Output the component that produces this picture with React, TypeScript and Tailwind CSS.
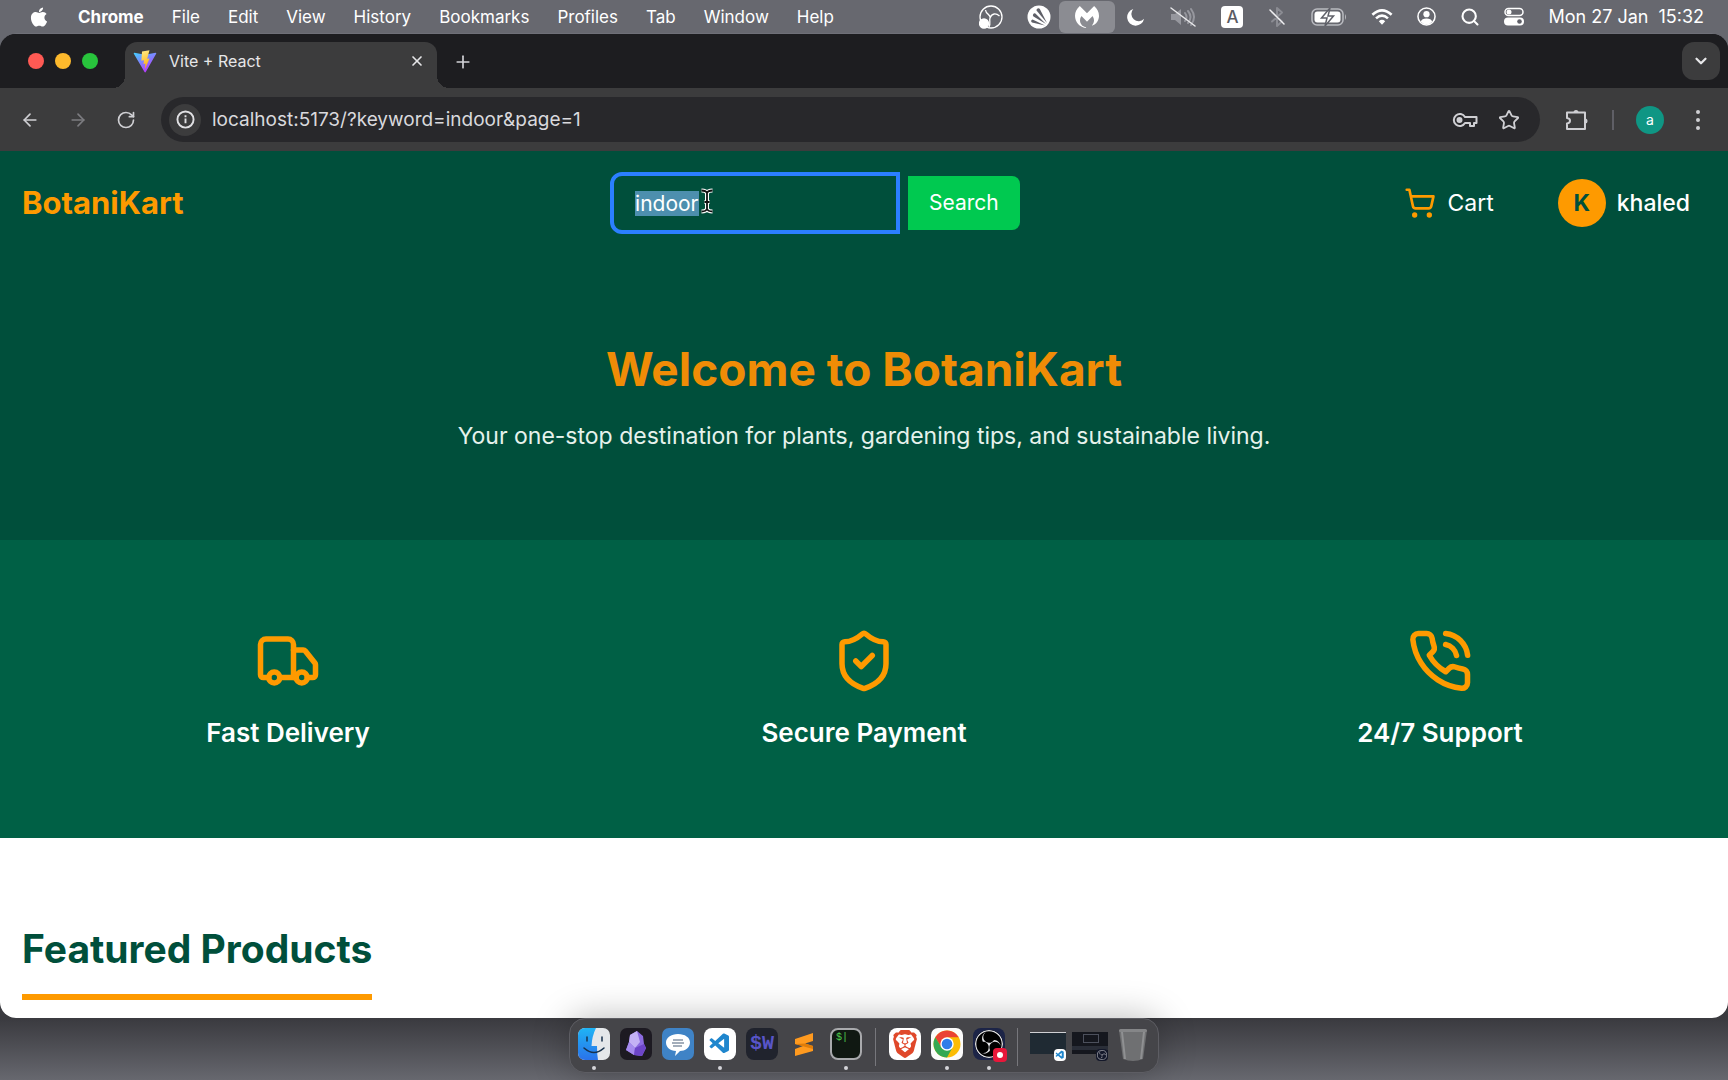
import { useEffect, useRef } from "react";
import type { ReactNode } from "react";
import {
  ArrowLeft,
  ArrowRight,
  ChevronDown,
  Plus,
  RotateCw,
  Search,
  ShieldCheck,
  ShoppingCart,
  Star,
  Truck,
  X,
} from "lucide-react";
import { FaApple } from "react-icons/fa";
import { SiBrave, SiMalwarebytes, SiObsstudio } from "react-icons/si";
import { VscVscode } from "react-icons/vsc";

const menus = ["File", "Edit", "View", "History", "Bookmarks", "Profiles", "Tab", "Window", "Help"];

function ObsGlyph({ className }: { className: string }) {
  return (
    <svg viewBox="0 0 24 24" className={className} fill="none" stroke="currentColor" strokeWidth="1.3">
      <circle cx="12" cy="12" r="11" />
      <path d="M11 13c1-4-4-3-4.500-8M11 13c2-5 6-5 9.500-2M11 13c-1 3 1 5-1 9" />
      <circle cx="5" cy="18.500" r="4.500" fill="currentColor" />
    </svg>
  );
}

function AvastGlyph() {
  return (
    <svg viewBox="0 0 24 24" className="size-6">
      <circle cx="12" cy="12" r="11.500" fill="#fff" />
      <g fill="#5f6068">
        <path d="M20 18L9.500 5.500a1.900 1.900 0 0 1 3.300-1.500z" />
        <path d="M19 19L6.500 11.500a1.800 1.800 0 0 1 1.900-3z" />
        <path d="M18 20.500L5 17.500a1.600 1.600 0 0 1 .6-3z" />
      </g>
    </svg>
  );
}

function MutedGlyph() {
  return (
    <svg viewBox="0 0 28 24" className="h-6 w-7" fill="none" strokeLinecap="round">
      <path d="M2 9h4l6-5v16l-6-5H2z" fill="#96979e" />
      <path d="M16 8q3 4 0 8M19 6q5 6 0 12M22 4q6 8 0 16" stroke="#96979e" strokeWidth="2" />
      <path d="M2 3l24 18" stroke="#e8e8ea" strokeWidth="1.500" />
    </svg>
  );
}

function BluetoothGlyph() {
  return (
    <svg viewBox="0 0 20 24" className="h-6 w-5" fill="none" strokeLinecap="round" strokeLinejoin="round">
      <path d="M5 7.500l10 9-5 4.500V3l5 4.500-10 9" stroke="#8b8c93" strokeWidth="2" />
      <path d="M3 5l14 14" stroke="#f0f0f2" strokeWidth="1.500" />
    </svg>
  );
}

function BatteryGlyph() {
  return (
    <svg viewBox="0 0 36 18" className="h-[18px] w-9">
      <rect x="1" y="1" width="31" height="16" rx="5" fill="none" stroke="#b9bac0" strokeWidth="1.500" />
      <path d="M34 6q2 3 0 6z" fill="#b9bac0" />
      <rect x="3.500" y="3.500" width="26" height="11" rx="3" fill="#fff" />
      <path d="M19 0l-8.500 10H16l-2 8 8.500-10H17z" fill="#fff" stroke="#5f6068" strokeWidth="1.500" />
    </svg>
  );
}

function WifiGlyph() {
  return (
    <svg viewBox="0 0 24 18" className="h-[18px] w-[22px]" fill="none" stroke="#fff" strokeWidth="2.800">
      <path d="M1.500 6.500q10.500-9.500 21 0M5.500 10.500q6.500-6 13 0" />
      <path d="M8.500 13.500q3.500-3 7 0L12 17.500z" fill="#fff" stroke="none" />
    </svg>
  );
}

function UserGlyph() {
  return (
    <svg viewBox="0 0 20 20" className="size-[19px]">
      <circle cx="10" cy="10" r="9" fill="none" stroke="#fff" strokeWidth="1.600" />
      <circle cx="10" cy="7.500" r="3.300" fill="#fff" />
      <path d="M4 15.500q1-3.500 6-3.500t6 3.500q-2.500 3-6 3t-6-3z" fill="#fff" />
    </svg>
  );
}

function ControlGlyph() {
  return (
    <svg viewBox="0 0 20 18" className="h-[19px] w-5">
      <rect x="1" y="1" width="18" height="7" rx="3.500" fill="none" stroke="#fff" strokeWidth="1.500" />
      <circle cx="5" cy="4.500" r="2.500" fill="#fff" />
      <rect x="0" y="10" width="20" height="8" rx="4" fill="#fff" />
      <circle cx="15.500" cy="14" r="2.300" fill="#5f6068" />
    </svg>
  );
}

function ViteLogo() {
  return (
    <svg viewBox="0 0 32 32" className="size-6 shrink-0">
      <defs>
        <linearGradient id="vite-body" x1="0" y1="0" x2="0.600" y2="1">
          <stop offset="0" stopColor="#41d1ff" />
          <stop offset="1" stopColor="#bd34fe" />
        </linearGradient>
        <linearGradient id="vite-bolt" x1="0.400" y1="0" x2="0.600" y2="1">
          <stop offset="0" stopColor="#ffea83" />
          <stop offset="1" stopColor="#ffa800" />
        </linearGradient>
      </defs>
      <path d="M30.900 6.300L17 30.700a.9.9 0 0 1-1.600 0L1.100 6.300a.9.9 0 0 1 .9-1.300l14 2.500 14-2.500a.9.9 0 0 1 .9 1.300z" fill="url(#vite-body)" />
      <path d="M22 1.500L12 3.400l-.8 12.300 3.500-.8-.7 5 2.600-.6-.8 7.700 6.300-14.500-3.200.6z" fill="url(#vite-bolt)" />
    </svg>
  );
}

function PhoneIcon({ className }: { className?: string }) {
  return (
    <svg viewBox="0 0 24 24" className={className} fill="none" stroke="currentColor" strokeWidth="2" strokeLinecap="round" strokeLinejoin="round">
      <path d="M22 16.920v3a2 2 0 0 1-2.180 2 19.790 19.790 0 0 1-8.630-3.070 19.500 19.500 0 0 1-6-6 19.790 19.790 0 0 1-3.070-8.670A2 2 0 0 1 4.110 2h3a2 2 0 0 1 2 1.720 12.840 12.840 0 0 0 .7 2.810 2 2 0 0 1-.45 2.110L8.090 9.910a16 16 0 0 0 6 6l1.270-1.270a2 2 0 0 1 2.110-.45 12.840 12.840 0 0 0 2.810.7A2 2 0 0 1 22 16.920z" />
      <path d="M14.050 2a9 9 0 0 1 8 7.940M14.050 6A5 5 0 0 1 18 10" />
    </svg>
  );
}

function MenuBar() {
  return (
    <header className="flex h-[33px] shrink-0 items-center justify-between pl-7 pr-6 text-[17px] leading-6 text-white">
      <nav aria-label="Application menu" className="flex items-center gap-7">
        <button aria-label="Apple menu">
          <FaApple className="size-[22px]" />
        </button>
        <button className="font-bold">Chrome</button>
        {menus.map((m) => (
          <button key={m}>{m}</button>
        ))}
      </nav>
      <div className="flex items-center gap-6">
        <ObsGlyph className="size-6" />
        <AvastGlyph />
        <span className="-ml-4 -mr-3 flex h-8 w-14 items-center justify-center rounded-md bg-[#8b8c92]">
          <SiMalwarebytes className="size-6" />
        </span>
        <svg viewBox="0 0 20 20" className="size-[18px]">
          <path d="M7 1a8 8 0 0 0 12 11A9.500 9.500 0 1 1 7 1z" fill="#fff" />
        </svg>
        <MutedGlyph />
        <span className="flex size-[22px] items-center justify-center rounded bg-white text-[17px] font-medium text-[#5a5b63]">A</span>
        <BluetoothGlyph />
        <BatteryGlyph />
        <WifiGlyph />
        <UserGlyph />
        <Search className="size-5" strokeWidth={2.500} />
        <ControlGlyph />
        <time className="flex gap-2.5 whitespace-nowrap text-lg leading-6">
          <span>Mon 27 Jan</span>
          <span>15:32</span>
        </time>
      </div>
    </header>
  );
}

function TabStrip() {
  return (
    <div className="flex h-[54px] items-end bg-[#1d1d20] pr-2">
      <div className="mr-[27px] flex gap-[11px] self-center pl-7">
        <button aria-label="Close window" className="size-4 rounded-full bg-[#ff5a54]" />
        <button aria-label="Minimise window" className="size-4 rounded-full bg-[#fdb92c]" />
        <button aria-label="Zoom window" className="size-4 rounded-full bg-[#28c43c]" />
      </div>
      <div className="relative flex h-[46px] w-[312px] items-center gap-3 rounded-t-xl bg-[#3c3c3d] pb-3 pl-2 pr-3 pt-1">
        <span className="absolute -left-3 bottom-0 size-3 bg-[radial-gradient(circle_at_0_0,transparent_12px,#3c3c3d_12px)]" />
        <span className="absolute -right-3 bottom-0 size-3 bg-[radial-gradient(circle_at_100%_0,transparent_12px,#3c3c3d_12px)]" />
        <ViteLogo />
        <span className="flex-1 text-base leading-5 text-[#e6e6e8]">Vite + React</span>
        <button aria-label="Close tab">
          <X className="size-4 text-[#e6e6e8]" strokeWidth={2.500} />
        </button>
      </div>
      <button aria-label="New tab" className="mb-4 ml-4 text-[#d2d2d6]">
        <Plus className="size-5" strokeWidth={2} />
      </button>
      <button
        aria-label="Search tabs"
        className="mb-2 ml-auto flex size-[38px] items-center justify-center rounded-xl bg-[#3c3c3d] text-[#e6e6e8]"
      >
        <ChevronDown className="size-[18px]" strokeWidth={3} />
      </button>
    </div>
  );
}

function Toolbar() {
  return (
    <div className="flex h-[63px] items-center bg-[#3c3c3d] pl-5 pr-[18px] text-[#cfcfd3]">
      <div className="mr-[25px] flex gap-7">
        <button aria-label="Back">
          <ArrowLeft className="size-5" />
        </button>
        <button aria-label="Forward" className="text-[#7c7c80]">
          <ArrowRight className="size-5" />
        </button>
        <button aria-label="Reload">
          <RotateCw className="size-5" />
        </button>
      </div>
      <div className="flex h-[45px] flex-1 items-center rounded-full bg-[#28282b] pl-2 pr-5">
        <span className="mr-[11px] flex size-8 items-center justify-center rounded-full bg-[#3c3c3d]">
          <svg viewBox="0 0 20 20" className="size-[19px]" fill="none" stroke="#e0e0e3" strokeWidth="2">
            <circle cx="10" cy="10" r="8.500" />
            <path d="M10 9v5M10 5.500v2" />
          </svg>
        </span>
        <input
          aria-label="Address"
          readOnly
          value="localhost:5173/?keyword=indoor&page=1"
          className="min-w-0 flex-1 bg-transparent text-[19px] leading-6 text-[#d9d9dd] outline-none"
        />
        <svg viewBox="0 0 26 16" className="h-4 w-[26px]" fill="none" stroke="currentColor" strokeWidth="2">
          <path d="M13 5a6 6 0 1 0 0 6h5v3h4v-3h2.500V5z" strokeLinejoin="round" />
          <circle cx="7.500" cy="8" r="2" fill="currentColor" />
        </svg>
        <button aria-label="Bookmark this page" className="ml-5">
          <Star className="size-[22px]" />
        </button>
      </div>
      <button aria-label="Extensions" className="ml-6">
        <svg viewBox="0 0 24 24" className="size-6" fill="none" stroke="currentColor" strokeWidth="2" strokeLinejoin="round">
          <path d="M3 4.500h18v16.500H3v-5.500q3-.5 3-2.750t-3-2.750z" />
          <path d="M9.500 4.500a2.500 2.500 0 0 1 5 0zM21 10.500a2.500 2.500 0 0 1 0 5z" fill="currentColor" stroke="none" />
        </svg>
      </button>
      <span className="ml-6 h-5 w-0.5 bg-[#5f5f66]" />
      <span className="ml-[22px] flex size-7 items-center justify-center rounded-full bg-[#0f9684] text-sm text-white">a</span>
      <button aria-label="Browser menu" className="ml-[22px] flex w-6 justify-center">
        <svg viewBox="0 0 6 20" className="h-5 w-[6px]" fill="currentColor">
          <circle cx="3" cy="2" r="2" />
          <circle cx="3" cy="10" r="2" />
          <circle cx="3" cy="18" r="2" />
        </svg>
      </button>
    </div>
  );
}

function SiteHeader() {
  const field = useRef<HTMLInputElement>(null);
  useEffect(() => {
    field.current?.focus();
    field.current?.select();
  }, []);
  return (
    <header className="grid grid-cols-[53fr_auto_60fr] items-center pb-6 pl-[22px] pr-[38px] pt-[25px]">
      <a href="#home" className="text-[31px] font-bold leading-9 text-[#fe9a00]">
        BotaniKart
      </a>
      <form className="flex gap-3" onSubmit={(e) => e.preventDefault()}>
        <div className="relative flex">
          <input
            ref={field}
            aria-label="Search plants"
            defaultValue="indoor"
            className="h-[54px] w-[282px] rounded-l-lg bg-transparent px-[21px] text-[21px] leading-8 text-white outline-4 outline-[#2b7fff] selection:bg-[#4d8fae] selection:text-white"
          />
          <svg viewBox="0 0 14 26" className="pointer-events-none absolute left-[86px] top-3 h-[26px] w-[14px]" fill="none">
            <path d="M1.500 2.500Q6 2.500 7 5q1-2.500 5.500-2.500M7 5v16M1.500 23.500Q6 23.500 7 21q1 2.500 5.500 2.500M4.500 14h5" stroke="#fff" strokeWidth="4" />
            <path d="M1.500 2.500Q6 2.500 7 5q1-2.500 5.500-2.500M7 5v16M1.500 23.500Q6 23.500 7 21q1 2.500 5.500 2.500M4.500 14h5" stroke="#111" strokeWidth="1.800" />
          </svg>
        </div>
        <button className="h-[54px] rounded-r-lg bg-[#00c950] px-[21px] text-[21px] leading-8 text-white">Search</button>
      </form>
      <div className="flex items-center justify-end">
        <a href="#cart" className="flex items-center gap-[11px] text-[23px] leading-8 text-white">
          <ShoppingCart className="size-8 text-[#fe9a00]" />
          Cart
        </a>
        <a href="#account" className="ml-16 flex items-center gap-[11px] text-[23px] font-medium leading-8 text-white">
          <span className="flex size-12 items-center justify-center rounded-full bg-[#fe9a00] font-bold text-[#004f3b]">K</span>
          khaled
        </a>
      </div>
    </header>
  );
}

const features = [
  { label: "Fast Delivery", Icon: Truck },
  { label: "Secure Payment", Icon: ShieldCheck },
  { label: "24/7 Support", Icon: PhoneIcon },
];

function Site() {
  return (
    <main className="flex-1 overflow-hidden bg-white">
      <div className="bg-[#004f3b]">
        <SiteHeader />
        <section className="flex flex-col items-center px-6 pb-[88px] pt-[88px] text-center">
          <h1 className="mb-6 text-[46px] font-bold leading-[54px] text-[#ef8c06]">Welcome to BotaniKart</h1>
          <p className="text-[23px] leading-8 text-[#e6f2ec]">
            Your one-stop destination for plants, gardening tips, and sustainable living.
          </p>
        </section>
      </div>
      <section className="grid grid-cols-3 bg-[#006045] py-[88px]">
        {features.map(({ label, Icon }) => (
          <div key={label} className="flex flex-col items-center gap-[22px]">
            <Icon className="size-[66px] text-[#fe9a00]" />
            <h2 className="text-[26px] font-semibold leading-[34px] text-white">{label}</h2>
          </div>
        ))}
      </section>
      <section className="px-[22px] pt-[88px]">
        <h2 className="inline-block border-b-[6px] border-[#fe9a00] pb-[22px] text-[39px] font-bold leading-[46px] text-[#004f3b]">
          Featured Products
        </h2>
      </section>
    </main>
  );
}

function DockItem({ label, running, children }: { label: string; running?: boolean; children: ReactNode }) {
  return (
    <button aria-label={label} className="relative flex size-8 items-center justify-center">
      {children}
      {running && <span className="absolute -bottom-[10px] size-1 rounded-full bg-[#d4d4d8]" />}
    </button>
  );
}

function FinderIcon() {
  return (
    <svg viewBox="0 0 32 32" className="size-8">
      <defs>
        <linearGradient id="finder-face" x1="0" y1="0" x2="0" y2="1">
          <stop offset="0" stopColor="#1fb4f5" />
          <stop offset="1" stopColor="#2a72ea" />
        </linearGradient>
      </defs>
      <rect width="32" height="32" rx="7" fill="#e4e7ea" />
      <path d="M7 0h11q-4 8-4.500 18H19q0 8 1 14H7a7 7 0 0 1-7-7V7a7 7 0 0 1 7-7z" fill="url(#finder-face)" />
      <path d="M9 9v4M24 9v4M6 20q10 9 20 0" fill="none" stroke="#17324d" strokeWidth="1.500" strokeLinecap="round" />
    </svg>
  );
}

function ObsidianIcon() {
  return (
    <svg viewBox="0 0 32 32" className="size-8">
      <rect width="32" height="32" rx="7" fill="#1d1a22" />
      <path d="M17 3l6 5 1 8 2 4-4 8-8-1-8-5 3-8 1-7z" fill="#8b6ae0" />
      <path d="M17 3l-7 4-1 7 6 6 5-6z" fill="#c4b2f5" />
      <path d="M6 22l3-8 6 6-1 7z" fill="#a68bee" />
      <path d="M15 20l9-4 2 4-4 8-8-1z" fill="#6d45c9" />
    </svg>
  );
}

function ChatIcon() {
  return (
    <svg viewBox="0 0 32 32" className="size-8">
      <rect width="32" height="32" rx="7" fill="#3f83c6" />
      <path d="M16 6c7 0 12 3.500 12 8.500S23 23 18 23l-5 5 1-5c-6 0-10-4-10-8.500S9 6 16 6z" fill="#fff" />
      <path d="M11 12h10M10 15h12M11 18h9" stroke="#4b5f78" strokeWidth="1.200" />
    </svg>
  );
}

function SublimeIcon() {
  return (
    <svg viewBox="0 0 32 32" className="size-8">
      <path d="M7 11l18-6v8l-8 2.500 8 2.500v5L7 28v-7l8-3-8-2z" fill="#ff9a1f" />
      <path d="M7 16l18 5v-3l-8-2.500z" fill="#e07c08" />
    </svg>
  );
}

function ChromeIcon() {
  return (
    <svg viewBox="0 0 32 32" className="size-8">
      <rect width="32" height="32" rx="7" fill="#fbfbfb" />
      <circle cx="16" cy="16" r="13.500" fill="#fbbc04" />
      <path d="M4.310 9.250A13.500 13.500 0 0 1 27.690 9.250H16L10.370 19.250z" fill="#ea4335" />
      <path d="M4.310 9.250A13.500 13.500 0 0 0 16 29.500l5.630-10.250H10.370z" fill="#34a853" />
      <circle cx="16" cy="16" r="6.700" fill="#fff" />
      <circle cx="16" cy="16" r="5.300" fill="#2f7de9" />
    </svg>
  );
}

function TrashIcon() {
  return (
    <svg viewBox="0 0 30 34" className="h-[34px] w-[30px]">
      <path d="M1 2h28l-4 29q-10 4-20 0z" fill="#6f7072" />
      <path d="M4 4l3 27M26 4l-3 27" stroke="#8f9092" strokeWidth="2" fill="none" />
      <rect x="1" y="1" width="28" height="3" rx="1.500" fill="#858688" />
    </svg>
  );
}

function Dock() {
  return (
    <footer className="relative flex h-[62px] shrink-0 justify-center bg-gradient-to-b from-[#3a3a3f] to-[#67686f] pb-[7px]">
      <div className="flex items-start gap-[10px] rounded-2xl border border-[#5d5d63] bg-[#454549] px-2 pt-[9px] shadow-[0_0_36px_rgba(0,0,0,0.28)]">
        <DockItem label="Finder" running>
          <FinderIcon />
        </DockItem>
        <DockItem label="Obsidian">
          <ObsidianIcon />
        </DockItem>
        <DockItem label="Chat">
          <ChatIcon />
        </DockItem>
        <DockItem label="Visual Studio Code" running>
          <span className="flex size-8 items-center justify-center rounded-lg bg-white">
            <VscVscode className="size-6 text-[#1f86cd]" />
          </span>
        </DockItem>
        <DockItem label="SW terminal">
          <span className="flex size-8 items-center justify-center rounded-lg bg-[#20232d] font-['Liberation_Mono'] text-xl font-bold text-[#5855c8]">
            $W
          </span>
        </DockItem>
        <DockItem label="Sublime Text">
          <SublimeIcon />
        </DockItem>
        <DockItem label="Terminal" running>
          <span className="flex size-8 rounded-lg border-2 border-[#a9aaad] bg-[#101812] pl-1 pt-0.5 font-['Liberation_Mono'] text-[10px] leading-3 text-[#4fd34f]">
            $|
          </span>
        </DockItem>
        <span className="mx-[3px] h-[38px] w-px bg-[#77777c]" />
        <DockItem label="Brave">
          <span className="flex size-8 items-center justify-center rounded-lg bg-white">
            <SiBrave className="size-7 text-[#e0482a]" />
          </span>
        </DockItem>
        <DockItem label="Chrome" running>
          <ChromeIcon />
        </DockItem>
        <DockItem label="OBS" running>
          <span className="flex size-8 items-center justify-center rounded-lg bg-[#1c2447]">
            <SiObsstudio className="size-7 rounded-full bg-black text-[#e4e4e8]" />
          </span>
          <span className="absolute -bottom-0.5 -right-0.5 flex size-[14px] items-center justify-center rounded bg-[#e8173a]">
            <span className="size-[6px] rounded-full bg-white" />
          </span>
        </DockItem>
        <span className="mx-0.5 h-[38px] w-px bg-[#77777c]" />
        <button aria-label="Minimised editor window" className="relative mt-1 h-[22px] w-9 border-t border-[#d0d0d4] bg-[#1f2a33]">
          <span className="absolute -bottom-[7px] right-0 flex size-3 items-center justify-center rounded-sm bg-white">
            <VscVscode className="size-[10px] text-[#1f86cd]" />
          </span>
        </button>
        <button aria-label="Minimised recorder window" className="relative -ml-1 mt-1 h-[22px] w-9 bg-[#15171e]">
          <span className="absolute left-[11px] top-0.5 h-[9px] w-4 border border-[#4c505c]" />
          <span className="absolute inset-x-0 bottom-1 h-1 bg-[#2a2e38]" />
          <span className="absolute -bottom-[7px] right-0 flex size-3 items-center justify-center rounded-sm bg-[#14182a]">
            <SiObsstudio className="size-[10px] text-[#c8c8cc]" />
          </span>
        </button>
        <button aria-label="Trash" className="mr-0.5">
          <TrashIcon />
        </button>
      </div>
    </footer>
  );
}

export default function App() {
  return (
    <div className="flex h-screen flex-col bg-[#67686f] font-['Inter',sans-serif]">
      <MenuBar />
      <div className="flex min-h-0 flex-1 flex-col bg-[linear-gradient(#67686f_50%,#3a3a3f_50%)]">
        <div className="flex min-h-0 flex-1 flex-col overflow-hidden rounded-2xl border-t border-[#6f7078] bg-[#1d1d20]">
          <TabStrip />
          <Toolbar />
          <Site />
        </div>
      </div>
      <Dock />
    </div>
  );
}
